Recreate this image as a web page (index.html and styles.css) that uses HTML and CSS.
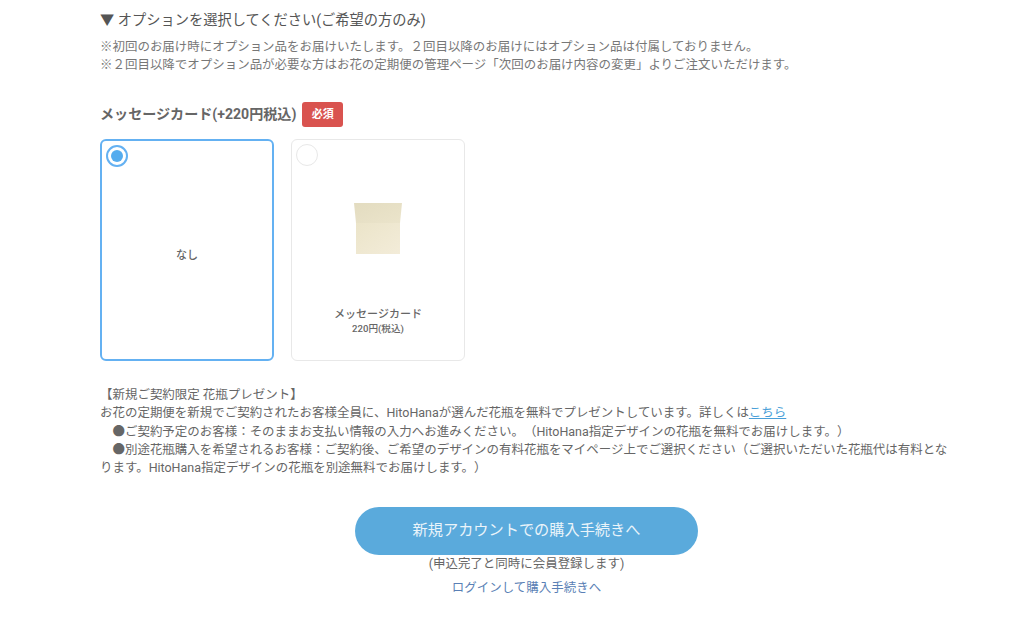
FILE: index.html
```html
<!DOCTYPE html>
<html lang="ja">
<head>
  <meta charset="UTF-8">
  <meta name="viewport" content="width=device-width, initial-scale=1.0">
  <title>購入手続き</title>
  <link rel="stylesheet" href="styles.css">
</head>
<body>
  <main class="container">
    <section class="option-head">
      <h2 class="option-title">▼ オプションを選択してください(ご希望の方のみ)</h2>
      <p class="option-note">※初回のお届け時にオプション品をお届けいたします。２回目以降のお届けにはオプション品は付属しておりません。<br>※２回目以降でオプション品が必要な方はお花の定期便の管理ページ「次回のお届け内容の変更」よりご注文いただけます。</p>
    </section>

    <section class="card-select">
      <h3 class="card-title">メッセージカード(+220円税込)<span class="required">必須</span></h3>
      <div class="cards">
        <label class="card card-checked">
          <span class="radio radio-on"></span>
          <span class="card-name card-name-none">なし</span>
        </label>
        <label class="card">
          <span class="radio"></span>
          <svg class="card-pic" width="48" height="51" viewBox="0 0 48 51">
            <defs>
              <linearGradient id="flap" x1="0" y1="0" x2="1" y2="1">
                <stop offset="0" stop-color="#e3dcc0"/>
                <stop offset="1" stop-color="#ebe4cb"/>
              </linearGradient>
              <linearGradient id="front" x1="0" y1="0" x2="1" y2="1">
                <stop offset="0" stop-color="#ebe4c9"/>
                <stop offset="1" stop-color="#f3ecd9"/>
              </linearGradient>
            </defs>
            <path d="M0 0H48L46 20H2Z" fill="url(#flap)"/>
            <rect x="2" y="20" width="44" height="31" fill="url(#front)"/>
          </svg>
          <span class="card-name">メッセージカード</span>
          <span class="card-price">220円(税込)</span>
        </label>
      </div>
    </section>

    <section class="present">
      <p>【新規ご契約限定 花瓶プレゼント】</p>
      <p>お花の定期便を新規でご契約されたお客様全員に、HitoHanaが選んだ花瓶を無料でプレゼントしています。詳しくは<a href="#" class="link">こちら</a></p>
      <p>　●ご契約予定のお客様：そのままお支払い情報の入力へお進みください。（HitoHana指定デザインの花瓶を無料でお届けします。）</p>
      <p>　●別途花瓶購入を希望されるお客様：ご契約後、ご希望のデザインの有料花瓶をマイページ上でご選択ください（ご選択いただいた花瓶代は有料となります。HitoHana指定デザインの花瓶を別途無料でお届けします。）</p>
    </section>

    <section class="actions">
      <a href="#" class="btn">新規アカウントでの購入手続きへ</a>
      <p class="btn-note">(申込完了と同時に会員登録します)</p>
      <a href="#" class="login">ログインして購入手続きへ</a>
    </section>
  </main>
</body>
</html>
```

FILE: styles.css
```css
/* Basic Styles */
body {
  font-family: Roboto, "Noto Sans CJK JP", sans-serif;
  color: #666;
  background-color: #fff;
  margin: 0;
  padding: 0;
  text-spacing-trim: space-all;
}

.container {
  width: 853px;
  margin-left: 100px;
  padding-top: 10px;
}

p {
  margin: 0;
}

.option-title {
  font-size: 14.24px;
  font-weight: normal;
  line-height: 20px;
  color: #555;
  margin: 0 0 8px;
}

.option-note {
  font-size: 12.48px;
  line-height: 18px;
  color: #777;
}

.card-select {
  margin-top: 28px;
}

.card-title {
  display: flex;
  align-items: center;
  font-size: 14.08px;
  line-height: 25px;
  color: #666;
  margin: 0 0 12px;
}

.required {
  background-color: #d9534f;
  color: #fff;
  font-size: 11px;
  font-weight: bold;
  line-height: 25px;
  padding: 0 9.5px;
  border-radius: 3px;
  margin-left: 6px;
}

.cards {
  display: flex;
  gap: 17px;
}

.card {
  position: relative;
  box-sizing: border-box;
  width: 174px;
  height: 222px;
  border: 1px solid #e8e8e8;
  border-radius: 6px;
  display: flex;
  flex-direction: column;
  align-items: center;
  color: #666;
}

.card-checked {
  border: 2px solid #64b1f2;
  justify-content: center;
}

.radio {
  position: absolute;
  left: 4px;
  top: 4px;
  box-sizing: border-box;
  width: 22px;
  height: 22px;
  border: 1px solid #e8e8e8;
  border-radius: 50%;
}

.radio-on {
  border: 2px solid #64b1f2;
  left: 4px;
  top: 4px;
}

.radio-on::after {
  content: "";
  position: absolute;
  left: 3px;
  top: 3px;
  width: 12px;
  height: 12px;
  border-radius: 50%;
  background-color: #55acee;
}

.card-pic {
  margin-top: 63px;
  margin-bottom: 53px;
}

.card-name {
  font-size: 11px;
  font-weight: 500;
  line-height: 16px;
}

.card-name-none {
  margin-top: 12px;
}

.card-price {
  font-size: 9.6px;
  font-weight: 500;
  line-height: 14px;
  margin-top: -1px;
}

.present {
  margin-top: 25px;
  font-size: 12.48px;
  line-height: 18.3px;
  color: #666;
}

.link {
  color: #4a9fd8;
}

.actions {
  margin-top: 30px;
  display: flex;
  flex-direction: column;
  align-items: center;
}

.btn {
  width: 343px;
  height: 48px;
  line-height: 46px;
  text-align: center;
  background-color: #5aaadc;
  color: #eaf4fa;
  border-radius: 24px;
  font-size: 15.2px;
  text-decoration: none;
}

.btn-note {
  font-size: 12.48px;
  line-height: 18px;
  margin-top: 0;
}

.login {
  font-size: 12.48px;
  line-height: 18px;
  margin-top: 6px;
  color: #5a7fb5;
  text-decoration: none;
}
```
